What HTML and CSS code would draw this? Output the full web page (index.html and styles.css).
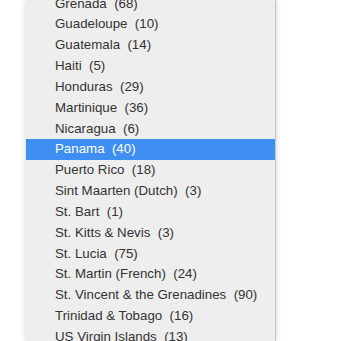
FILE: index.html
```html
<!DOCTYPE html>
<html>
<head>
<meta charset="utf-8">
<link rel="stylesheet" href="styles.css">
</head>
<body>
<div class="menu">
  <ul class="list">
    <li class="item">Grenada&nbsp; (68)</li>
    <li class="item">Guadeloupe&nbsp; (10)</li>
    <li class="item">Guatemala&nbsp; (14)</li>
    <li class="item">Haiti&nbsp; (5)</li>
    <li class="item">Honduras&nbsp; (29)</li>
    <li class="item">Martinique&nbsp; (36)</li>
    <li class="item">Nicaragua&nbsp; (6)</li>
    <li class="item selected">Panama&nbsp; (40)</li>
    <li class="item">Puerto Rico&nbsp; (18)</li>
    <li class="item">Sint Maarten (Dutch)&nbsp; (3)</li>
    <li class="item">St. Bart&nbsp; (1)</li>
    <li class="item">St. Kitts &amp; Nevis&nbsp; (3)</li>
    <li class="item">St. Lucia&nbsp; (75)</li>
    <li class="item">St. Martin (French)&nbsp; (24)</li>
    <li class="item">St. Vincent &amp; the Grenadines&nbsp; (90)</li>
    <li class="item">Trinidad &amp; Tobago&nbsp; (16)</li>
    <li class="item">US Virgin Islands&nbsp; (13)</li>
  </ul>
</div>
</body>
</html>
```

FILE: styles.css
```css
html, body {
  margin: 0;
  padding: 0;
  background: #ffffff;
  height: 100%;
  overflow: hidden;
}
.menu {
  margin-left: 26px;
  width: 249px;
  height: 100%;
  background: #eeeeee;
  border-right: 1px solid #c6c6c6;
  box-shadow: 0 0 6px rgba(0, 0, 0, 0.18);
}
.list {
  list-style: none;
  margin: 0;
  padding: 0;
  position: relative;
  top: -6.5px;
}
.item {
  height: 20.85px;
  line-height: 20.85px;
  padding-left: 29px;
  font-family: "Liberation Sans", Arial, sans-serif;
  font-size: 13.3px;
  color: #333333;
  white-space: nowrap;
}
.item.selected {
  background: #3f8ef2;
  color: #ffffff;
}
```
